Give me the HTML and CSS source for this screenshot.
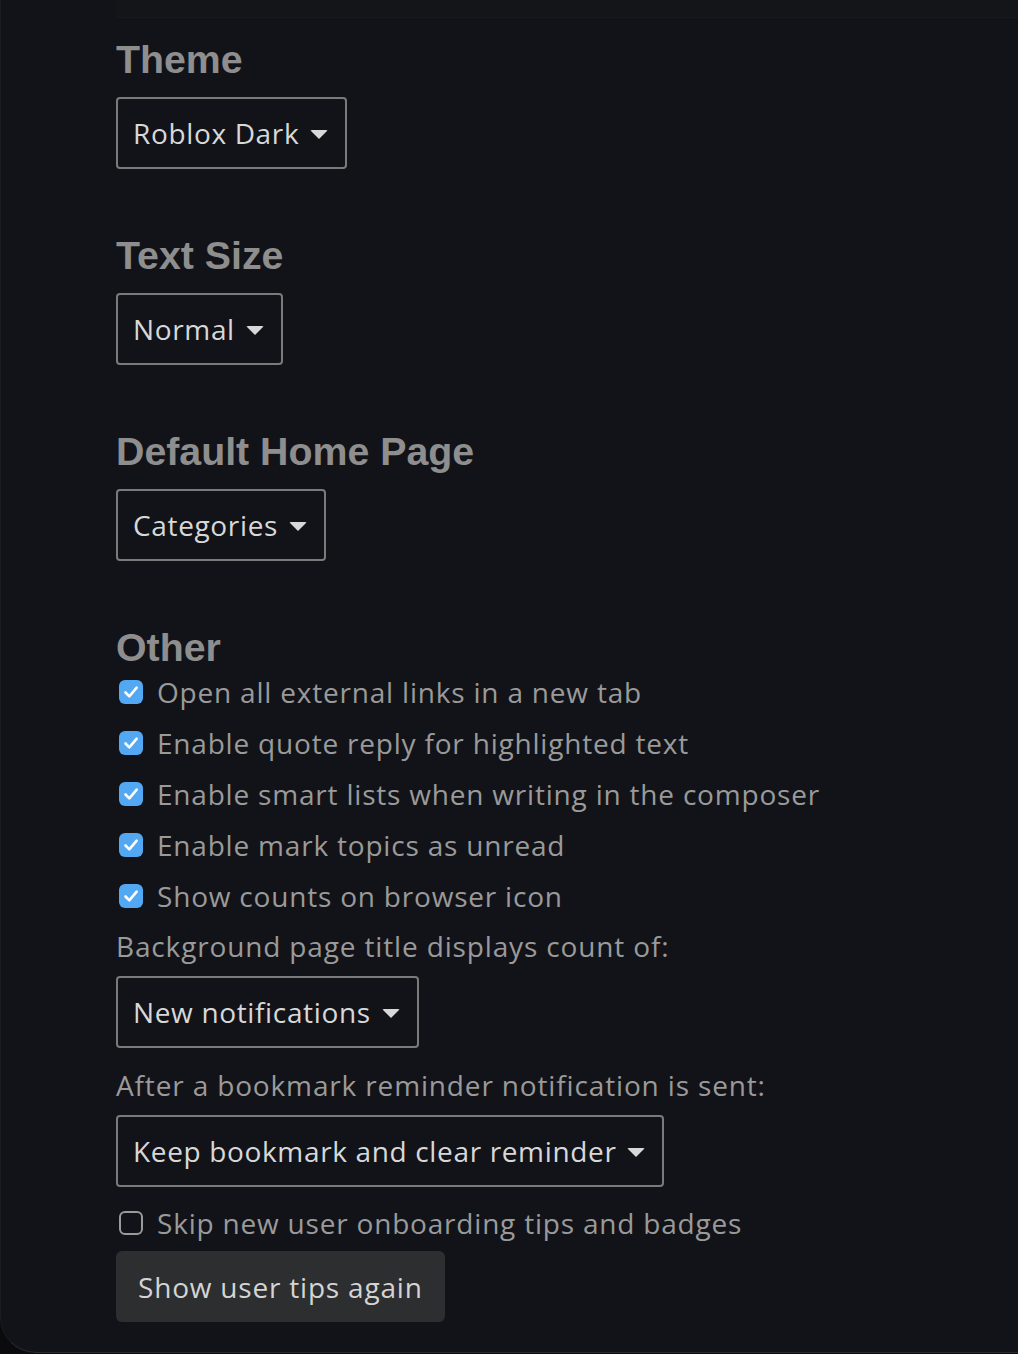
FILE: index.html
```html
<!DOCTYPE html>
<html lang="en">
<head>
  <meta charset="UTF-8" />
  <meta name="viewport" content="width=device-width, initial-scale=1.0" />
  <title>Interface Preferences</title>
  <link rel="stylesheet" href="styles.css">
</head>
<body>
  <div class="painel">
    <div class="topo"></div>

    <div class="conteudo">
      <div class="secao">
        <h2>Theme</h2>
        <div class="seletor">Roblox Dark <span class="seta"></span></div>
      </div>

      <div class="secao">
        <h2>Text Size</h2>
        <div class="seletor">Normal <span class="seta"></span></div>
      </div>

      <div class="secao">
        <h2>Default Home Page</h2>
        <div class="seletor">Categories <span class="seta"></span></div>
      </div>

      <div class="secao outros">
        <h2>Other</h2>
        <label class="opcao"><span class="caixa marcada"><svg viewBox="0 0 24 24"><path d="M6.5 12.5l3.8 3.8 7.4-8.6" /></svg></span>Open all external links in a new tab</label>
        <label class="opcao"><span class="caixa marcada"><svg viewBox="0 0 24 24"><path d="M6.5 12.5l3.8 3.8 7.4-8.6" /></svg></span>Enable quote reply for highlighted text</label>
        <label class="opcao"><span class="caixa marcada"><svg viewBox="0 0 24 24"><path d="M6.5 12.5l3.8 3.8 7.4-8.6" /></svg></span>Enable smart lists when writing in the composer</label>
        <label class="opcao"><span class="caixa marcada"><svg viewBox="0 0 24 24"><path d="M6.5 12.5l3.8 3.8 7.4-8.6" /></svg></span>Enable mark topics as unread</label>
        <label class="opcao"><span class="caixa marcada"><svg viewBox="0 0 24 24"><path d="M6.5 12.5l3.8 3.8 7.4-8.6" /></svg></span>Show counts on browser icon</label>

        <p class="rotulo">Background page title displays count of:</p>
        <div class="seletor">New notifications <span class="seta"></span></div>

        <p class="rotulo rotulo-2">After a bookmark reminder notification is sent:</p>
        <div class="seletor">Keep bookmark and clear reminder <span class="seta"></span></div>

        <label class="opcao opcao-solta"><span class="caixa"></span>Skip new user onboarding tips and badges</label>
        <button class="btn-dicas">Show user tips again</button>
      </div>
    </div>
  </div>
</body>
</html>
```

FILE: styles.css
```css
body {
  margin: 0;
  background: #0b0b0d;
  font-family: "Open Sans", "Noto Sans", sans-serif;
  color: #9a9a9a;
}
.painel {
  height: 1353px;
  background: #121318;
  border-left: 1px solid #1b1c20;
  border-bottom: 1px solid #2a2b30;
  border-bottom-left-radius: 36px;
  box-sizing: border-box;
  overflow: hidden;
}
.topo {
  margin-left: 115px;
  height: 17px;
  background: #141519;
  border-bottom: 1px solid #18191d;
}
.conteudo {
  padding-left: 115px;
  padding-top: 17px;
}
.secao {
  margin-bottom: 62px;
}
h2 {
  font-family: "Liberation Sans", Arial, sans-serif;
  font-size: 39.3px;
  line-height: 48px;
  font-weight: bold;
  color: #8e8e8e;
  margin: 0 0 14px 0;
}
.seletor {
  display: inline-flex;
  align-items: center;
  height: 72px;
  box-sizing: border-box;
  padding: 0 17px 0 15px;
  border: 2px solid #7a7a7a;
  border-radius: 4px;
  font-size: 28px;
  letter-spacing: 0.65px;
  color: #d8d8d8;
}
.seta {
  width: 0;
  height: 0;
  margin-left: 11px;
  margin-top: 2px;
  border-left: 9px solid transparent;
  border-right: 9px solid transparent;
  border-top: 9px solid #d8d8d8;
  border-radius: 2px;
}
.outros h2 {
  margin-bottom: -5px;
}
.opcao {
  display: flex;
  align-items: center;
  height: 51px;
  font-size: 28px;
  letter-spacing: 0.8px;
  color: #9a9a9a;
}
.caixa {
  width: 24px;
  height: 24px;
  margin: 0 14px 0 3px;
  box-sizing: border-box;
  border: 2px solid #9a9a9a;
  border-radius: 6px;
  flex-shrink: 0;
}
.caixa.marcada {
  background: #52a8f2;
  border: none;
}
.caixa svg {
  display: block;
  width: 24px;
  height: 24px;
  fill: none;
  stroke: #fff;
  stroke-width: 2.6;
  stroke-linecap: round;
  stroke-linejoin: round;
}
.rotulo {
  margin: 0;
  height: 51px;
  line-height: 51px;
  font-size: 28px;
  letter-spacing: 0.85px;
}
.rotulo-2 {
  margin-top: 12px;
}
.rotulo + .seletor {
  margin-top: 4px;
}
.opcao-solta {
  margin-top: 10px;
}
.btn-dicas {
  display: block;
  margin-top: 3px;
  height: 71px;
  padding: 0 22px;
  background: #2d2e30;
  color: #d4d4d4;
  border: none;
  border-radius: 6px;
  font-family: "Open Sans", "Noto Sans", sans-serif;
  font-size: 28px;
  letter-spacing: 0.8px;
  cursor: pointer;
}
```
